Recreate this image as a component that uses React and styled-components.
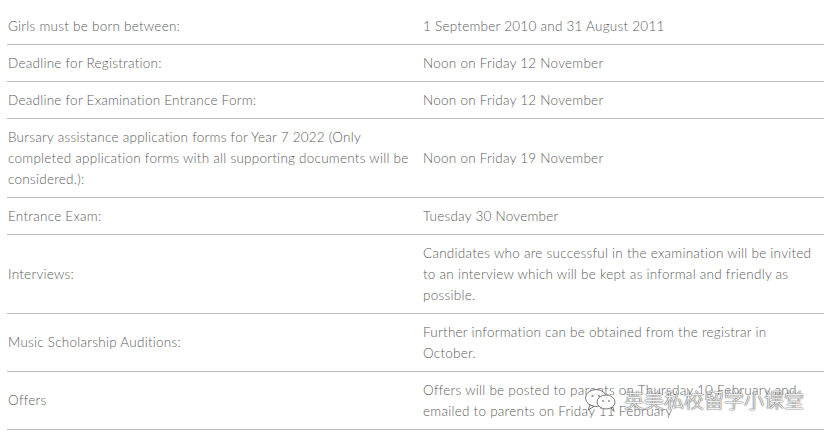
import React from 'react';
import styled, { createGlobalStyle } from 'styled-components';

const GlobalStyle = createGlobalStyle`
	body {
		margin: 0;
		background: #ffffff;
	}
`;

const Page = styled.div`
	position: relative;
	width: 831px;
	height: 435px;
	overflow: hidden;
	padding: 8px 7px 0 7px;
	box-sizing: border-box;
	font-family: Lato, 'Noto Sans', sans-serif;
	font-weight: 300;
	font-size: 13.5px;
	letter-spacing: 0.25px;
	line-height: 21px;
	color: #5c5c5c;
`;

const Table = styled.div`
	width: 817px;
`;

const Row = styled.div`
	display: grid;
	grid-template-columns: 415px 1fr;
	align-items: center;
	border-bottom: 1px solid #bdbdbd;
	padding: 7.5px 0;
`;

const Label = styled.div`
	padding-left: 1px;
	padding-right: 1px;
`;

const Value = styled.div`
	padding-left: 1px;
	padding-right: 1px;
`;

const Watermark = styled.div`
	position: absolute;
	left: 584px;
	top: 386px;
	display: flex;
	align-items: center;
	gap: 6px;
	font-family: 'Noto Sans CJK SC', sans-serif;
	font-size: 20px;
	line-height: 28px;
	letter-spacing: 0;
	color: rgba(255, 255, 255, 0.92);
	text-shadow: 0 0 1px #666, 0 0 1px #666, 0 0 2px #888;
	pointer-events: none;
`;

const rows = [
	['Girls must be born between:', '1 September 2010 and 31 August 2011'],
	['Deadline for Registration:', 'Noon on Friday 12 November'],
	['Deadline for Examination Entrance Form:', 'Noon on Friday 12 November'],
	[
		'Bursary assistance application forms for Year 7 2022 (Only completed application forms with all supporting documents will be considered.):',
		'Noon on Friday 19 November',
	],
	['Entrance Exam:', 'Tuesday 30 November'],
	[
		'Interviews:',
		'Candidates who are successful in the examination will be invited to an interview which will be kept as informal and friendly as possible.',
	],
	['Music Scholarship Auditions:', 'Further information can be obtained from the registrar in October.'],
	['Offers', 'Offers will be posted to parents on Thursday 10 February and emailed to parents on Friday 11 February'],
];

function ChatLogo() {
	return (
		<svg width="34" height="26" viewBox="0 0 34 26">
			<g fill="rgba(255,255,255,0.85)" stroke="#7a7a7a" strokeWidth="1">
				<ellipse cx="12" cy="11" rx="10.5" ry="8.5" />
				<path d="M6 18 L4 23 L10 19.5 Z" />
				<ellipse cx="22" cy="15" rx="9" ry="7" />
				<path d="M27 21 L30 24.5 L29 20 Z" />
			</g>
			<g fill="#8a8a8a">
				<circle cx="8.5" cy="9" r="1.1" />
				<circle cx="15" cy="9" r="1.1" />
				<circle cx="19" cy="14" r="0.9" />
				<circle cx="25" cy="14" r="0.9" />
			</g>
		</svg>
	);
}

export default function App() {
	return (
		<>
			<GlobalStyle />
			<Page>
				<Table>
					{rows.map(([label, value]) => (
						<Row key={label}>
							<Label>{label}</Label>
							<Value>{value}</Value>
						</Row>
					))}
				</Table>
				<Watermark>
					<ChatLogo />
					<span>英美私校留学小课堂</span>
				</Watermark>
			</Page>
		</>
	);
}
